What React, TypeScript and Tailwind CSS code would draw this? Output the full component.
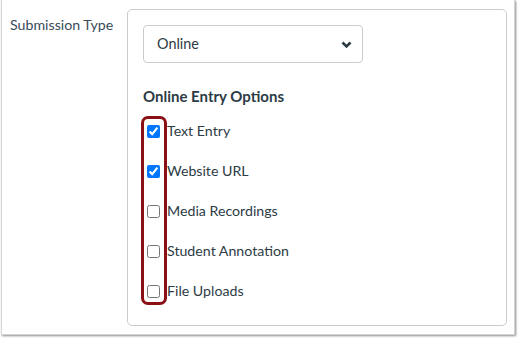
import React from 'react';

const options = [
  { label: 'Text Entry', checked: true },
  { label: 'Website URL', checked: true },
  { label: 'Media Recordings', checked: false },
  { label: 'Student Annotation', checked: false },
  { label: 'File Uploads', checked: false },
];

function App() {
  return (
    <div className="w-[518px] h-[338px] bg-white overflow-hidden font-['Lato',_sans-serif] text-[#2d3b45]">
      <div className="ml-[1px] w-[514px] h-[335px] bg-white border-x border-b border-[#d4d4d4] shadow-[1px_1px_2px_rgba(0,0,0,0.45)] flex">
        {/* Label column */}
        <div className="w-[125px] shrink-0 pl-[8px] pt-[15px] text-[14.2px] leading-[20px] text-[#394b58]">
          Submission Type
        </div>

        {/* Options panel */}
        <div className="relative mt-[9px] w-[380px] h-[317px] border border-[#c7cdd1] rounded-[5px] pl-[15px] pt-[15px]">
          <div className="relative w-[220px] h-[38px] border border-[#c7cdd1] rounded-[4px] flex items-center pl-[13px] text-[14.4px]">
            Online
            <svg className="absolute right-[10px] top-[15px]" width="11" height="8" viewBox="0 0 11 8">
              <path d="M1.5 1.5 L5.5 5.5 L9.5 1.5" fill="none" stroke="#2d3b45" strokeWidth="2.6" />
            </svg>
          </div>

          <h3 className="mt-[23px] text-[15px] leading-[20px] font-bold">Online Entry Options</h3>

          <ul className="mt-[5px]">
            {options.map((opt) => (
              <li key={opt.label} className="h-[40px] flex items-center">
                <input
                  type="checkbox"
                  readOnly
                  checked={opt.checked}
                  className="ml-[4px] w-[13px] h-[13px] m-0"
                />
                <span className="ml-[7px] text-[14.2px] leading-[20px]">{opt.label}</span>
              </li>
            ))}
          </ul>

          {/* highlight annotation */}
          <div className="absolute left-[13px] top-[106px] w-[26px] h-[189px] border-[3px] border-[#8a1016] rounded-[7px]" />
        </div>
      </div>
    </div>
  );
}

export default App;
